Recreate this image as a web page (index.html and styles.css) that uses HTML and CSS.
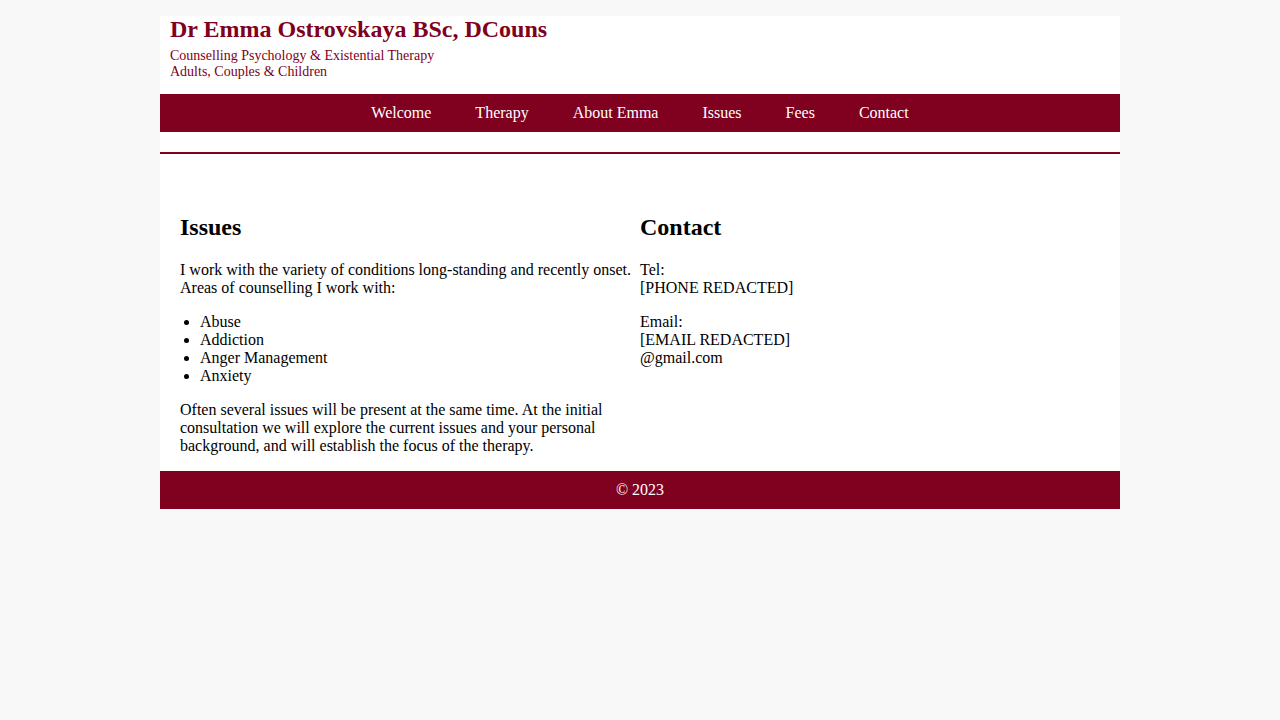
FILE: index.html
```html
<!DOCTYPE html>
<html lang="en">
<head>
<meta charset="utf-8">
<title>Dr Emma Ostrovskaya</title>
<link rel="stylesheet" href="styles.css">
</head>
<body>
<div class="page">
  <header class="header">
    <h1 class="title">Dr Emma Ostrovskaya BSc, DCouns</h1>
    <p class="subtitle">Counselling Psychology &amp; Existential Therapy<br>Adults, Couples &amp; Children</p>
  </header>
  <nav class="nav">
    <a class="nav-link" href="#">Welcome</a>
    <a class="nav-link" href="#">Therapy</a>
    <a class="nav-link" href="#">About Emma</a>
    <a class="nav-link" href="#">Issues</a>
    <a class="nav-link" href="#">Fees</a>
    <a class="nav-link" href="#">Contact</a>
  </nav>
  <div class="spacer"></div>
  <main class="content">
    <section class="col">
      <h2 class="heading">Issues</h2>
      <p class="text">I work with the variety of conditions long-standing and recently onset. Areas of counselling I work with:</p>
      <ul class="list">
        <li>Abuse</li>
        <li>Addiction</li>
        <li>Anger Management</li>
        <li>Anxiety</li>
      </ul>
      <p class="text">Often several issues will be present at the same time. At the initial consultation we will explore the current issues and your personal background, and will establish the focus of the therapy.</p>
    </section>
    <section class="col">
      <h2 class="heading">Contact</h2>
      <p class="text">Tel:<br>[PHONE REDACTED]</p>
      <p class="text">Email:<br>[EMAIL REDACTED]<br>@gmail.com</p>
    </section>
  </main>
  <footer class="footer">© 2023</footer>
</div>
</body>
</html>
```
FILE: styles.css
```css
html, body {
  margin: 0;
  padding: 0;
}
body {
  background: #f8f8f8;
  font-family: "Liberation Serif", "Times New Roman", serif;
  font-size: 16px;
  color: #000;
}
.page {
  width: 960px;
  margin: 16px auto 0;
  background: #fff;
}
.header {
  padding: 0 10px 14px;
  color: #800020;
}
.title {
  margin: 0;
  font-size: 24px;
  line-height: 26px;
  font-weight: bold;
}
.subtitle {
  margin: 6px 0 0;
  font-size: 14px;
  line-height: 16px;
}
.nav {
  background: #800020;
  height: 38px;
  display: flex;
  justify-content: center;
  align-items: center;
}
.nav-link {
  color: #fff;
  text-decoration: none;
  padding: 0 22px;
  line-height: 18px;
}
.spacer {
  height: 20px;
  border-bottom: 2px solid #800020;
}
.content {
  display: grid;
  grid-template-columns: 1fr 1fr;
  padding: 59px 20px 0;
}
.heading {
  margin: 0 0 20px;
  font-size: 24px;
  line-height: 28px;
}
.text {
  margin: 0 0 16px;
  line-height: 18px;
}
.list {
  margin: 0 0 16px;
  padding-left: 20px;
  line-height: 18px;
}
.footer {
  background: #800020;
  color: #fff;
  height: 38px;
  display: flex;
  align-items: center;
  justify-content: center;
}
```
